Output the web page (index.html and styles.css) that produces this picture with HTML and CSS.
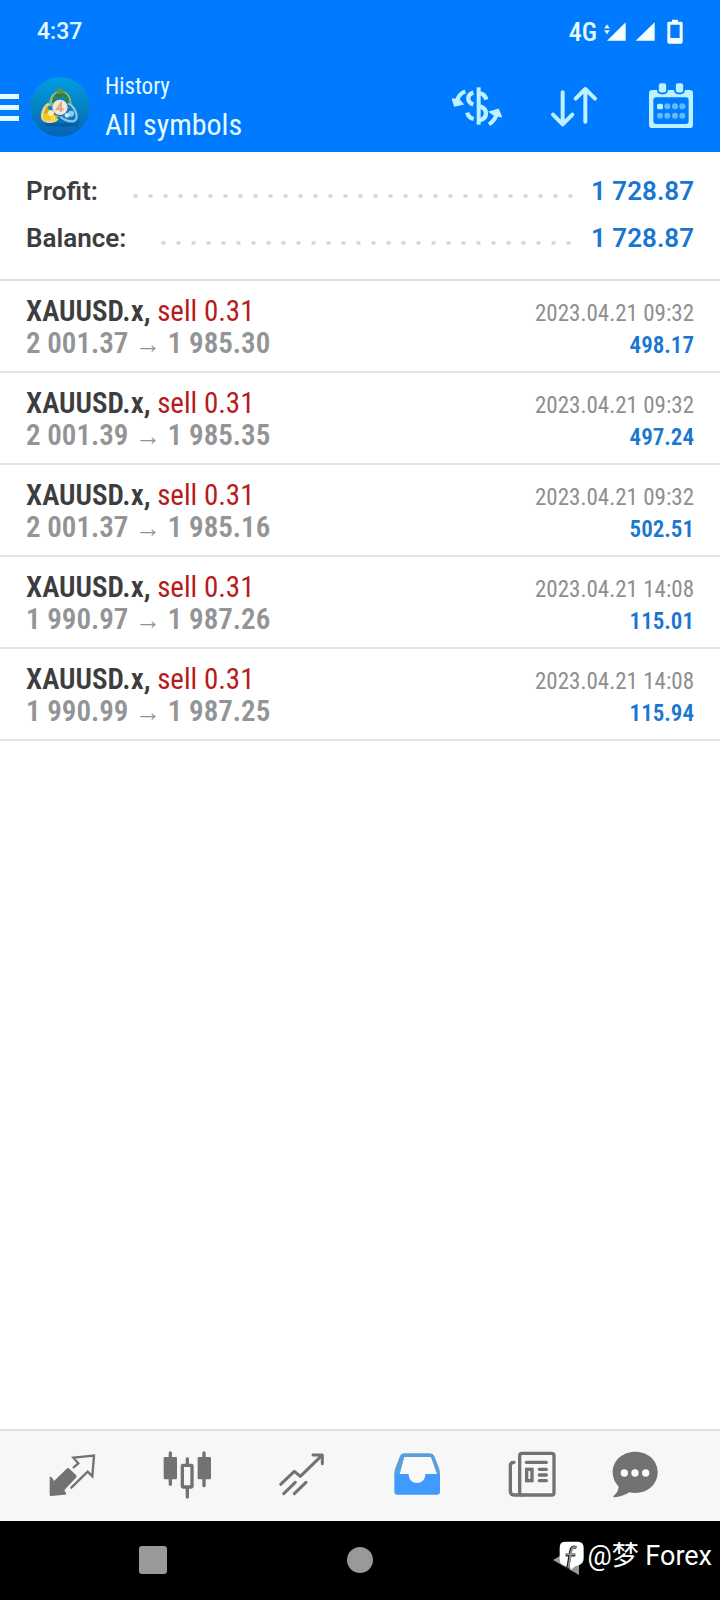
FILE: index.html
```html
<!DOCTYPE html>
<html lang="en">
<head>
<meta charset="utf-8">
<meta name="viewport" content="width=device-width, initial-scale=1">
<title>History</title>
<link rel="stylesheet" href="styles.css">
</head>
<body>
<div class="app">
  <header class="top">
    <div class="status">
      <span class="clock">4:37</span>
      <div class="signals">
        <span class="network">4G</span>
        <svg width="79" height="26" viewBox="0 0 237 78" fill="#f4feff" aria-hidden="true">
          <path d="M9 65L65 10v55z"/>
          <path d="M-1 29L9 15l10 14zM-1 33L9 47l10-14z" stroke="#007bff" stroke-width="2"/>
          <path d="M95 65l57-55v55z"/>
          <path fill-rule="evenodd" d="M204 2h18v6h9q5 0 5 5v56q0 5-5 5h-36q-5 0-5-5V13q0-5 5-5h9zM199 17v40h28V17z"/>
        </svg>
      </div>
    </div>
    <div class="bar">
      <button class="menu" aria-label="Menu">
        <svg width="19" height="28" viewBox="0 0 19 28" fill="#e4fbff"><path d="M0 0h19v5H0zM0 11h19v5H0zM0 22h19v5H0z"/></svg>
      </button>
      <svg class="logo" width="60" height="60" viewBox="0 0 180 180" aria-hidden="true">
        <defs>
          <linearGradient id="disc" x1="0" y1="0" x2="0" y2="1"><stop offset="0" stop-color="#009fe2"/><stop offset=".5" stop-color="#0582c4"/><stop offset="1" stop-color="#0563b5"/></linearGradient>
        </defs>
        <circle cx="90" cy="90" r="89" fill="url(#disc)"/>
        <path d="M43 139h95l14-15-10 22-48 4-48-4z" fill="#034b86" opacity=".5"/>
        <path d="M64 88c-6-54 58-54 54-4" fill="none" stroke="#8bb989" stroke-width="12"/>
        <path d="M70 78c2-36 42-38 44 0" fill="none" stroke="#348239" stroke-width="10"/>
        <path d="M82 124c-10 14-47 13-45-7 1-14 7-29 20-37" fill="none" stroke="#e8d887" stroke-width="9"/>
        <path d="M51 84q7 26 38 34l-17 12q-30-1-31-17z" fill="#c6a92c"/>
        <path d="M119 80c20 18 31 50 8 53q-20 0-36-14" fill="none" stroke="#88c6e4" stroke-width="7"/>
        <path d="M119 88q22 34-2 40-14-2-24-13z" fill="#2875bc"/>
        <ellipse cx="90" cy="42" rx="10" ry="9" fill="#4f984f"/><path d="M84 51h12v13H84z" fill="#397b3d"/>
        <circle cx="51" cy="119" r="12" fill="#f0c72a"/><circle cx="63" cy="108" r="9" fill="#fff0a7"/><circle cx="69" cy="123" r="8" fill="#ffdd43"/>
        <circle cx="123" cy="110" r="9" fill="#84ceff"/><circle cx="111" cy="115" r="7" fill="#c4edff"/>
        <circle cx="90" cy="91" r="23" fill="#eee8df"/>
        <path d="M93 105V79L81 97h20" fill="none" stroke="#e6a480" stroke-width="6"/>
      </svg>
      <div class="titles">
        <span class="subtitle">History</span>
        <h1 class="title">All symbols</h1>
      </div>
      <div class="actions">
        <button aria-label="Currency">
          <svg width="50" height="48" viewBox="0 0 150 144" fill="none" stroke="#bdf1ff" stroke-width="13">
            <path d="M80 19v112" stroke-width="12"/>
            <path d="M64 35Q49 39 49 53q0 12 15 17M82 37q16 0 21 19M82 76q20 5 20 21 0 18-20 21M65 114q-16-4-19-19"/>
            <path d="M40 31Q20 39 16 58" stroke-width="12"/><path d="M1 54l7 21 25-6-12-13z" fill="#bdf1ff" stroke-width="4"/>
            <path d="M111 130q19-13 23-31" stroke-width="12"/><path d="M113 93l26-8 9 22-20-4z" fill="#bdf1ff" stroke-width="4"/>
          </svg>
        </button>
        <button aria-label="Sort">
          <svg width="50" height="48" viewBox="0 0 150 144" fill="none" stroke="#bdf1ff" stroke-width="12" stroke-linecap="round" stroke-linejoin="round"><path d="M41 34v96M12 101l29 29 29-29M109 122V26M80 53l29-29 29 29"/></svg>
        </button>
        <button aria-label="Choose period">
          <svg width="50" height="48" viewBox="0 0 150 144">
            <path fill="#bdf1ff" fill-rule="evenodd" d="M19 27h112q10 0 10 10v94q0 10-10 10H19q-10 0-10-10V37q0-10 10-10zM31 49q-9 0-9 9v62q0 9 9 9h88q9 0 9-9V58q0-9-9-9z"/>
            <g fill="#bdf1ff" stroke="#007bff" stroke-width="5"><rect x="36" y="4" width="27" height="33" rx="9"/><rect x="87" y="4" width="27" height="33" rx="9"/></g>
            <rect x="33" y="68" width="18" height="17" rx="5" fill="#bdf1ff"/>
            <g fill="#62bbff"><circle cx="64" cy="76" r="9"/><circle cx="87" cy="76" r="9"/><circle cx="109" cy="76" r="9"/><circle cx="42" cy="104" r="9"/><circle cx="64" cy="104" r="9"/><circle cx="87" cy="104" r="9"/><circle cx="109" cy="104" r="9"/></g>
          </svg>
        </button>
      </div>
    </div>
  </header>

  <main class="content">
    <dl class="summary">
      <div class="total"><dt>Profit:</dt><dd>1 728.87</dd></div>
      <div class="total"><dt>Balance:</dt><dd>1 728.87</dd></div>
    </dl>
    <ul class="deals">
      <li class="deal">
        <div class="line"><span class="symbol">XAUUSD.x, <span class="side">sell 0.31</span></span><time class="time">2023.04.21 09:32</time></div>
        <div class="line"><span class="prices">2 001.37 <span class="arrow">→</span> 1 985.30</span><span class="gain">498.17</span></div>
      </li>
      <li class="deal">
        <div class="line"><span class="symbol">XAUUSD.x, <span class="side">sell 0.31</span></span><time class="time">2023.04.21 09:32</time></div>
        <div class="line"><span class="prices">2 001.39 <span class="arrow">→</span> 1 985.35</span><span class="gain">497.24</span></div>
      </li>
      <li class="deal">
        <div class="line"><span class="symbol">XAUUSD.x, <span class="side">sell 0.31</span></span><time class="time">2023.04.21 09:32</time></div>
        <div class="line"><span class="prices">2 001.37 <span class="arrow">→</span> 1 985.16</span><span class="gain">502.51</span></div>
      </li>
      <li class="deal">
        <div class="line"><span class="symbol">XAUUSD.x, <span class="side">sell 0.31</span></span><time class="time">2023.04.21 14:08</time></div>
        <div class="line"><span class="prices">1 990.97 <span class="arrow">→</span> 1 987.26</span><span class="gain">115.01</span></div>
      </li>
      <li class="deal">
        <div class="line"><span class="symbol">XAUUSD.x, <span class="side">sell 0.31</span></span><time class="time">2023.04.21 14:08</time></div>
        <div class="line"><span class="prices">1 990.99 <span class="arrow">→</span> 1 987.25</span><span class="gain">115.94</span></div>
      </li>
    </ul>
  </main>

  <nav class="tabs">
    <button class="tab" aria-label="Quotes">
      <svg width="48" height="48" viewBox="0 0 144 144">
        <path fill="#727272" d="M5 78q5-3 13 12l38-37q4-4 8 0l20 19q4 4 0 8l-34 36q-2 5 5 10 0 5-5 5l-41 4q-4 0-4-4z"/>
        <path fill="none" stroke="#727272" stroke-width="7" stroke-linecap="round" d="M77 49l14-12-15-17 62-6-5 62-14-14-49 48"/>
      </svg>
    </button>
    <button class="tab" aria-label="Charts">
      <svg width="48" height="48" viewBox="0 0 144 144" fill="#727272">
        <rect x="2" y="18" width="40" height="67" rx="4"/><rect x="104" y="18" width="40" height="67" rx="4"/>
        <path d="M22 6v94M123 6v98M73 24v18M73 108v30" stroke="#727272" stroke-width="10" stroke-linecap="round"/>
        <rect x="58" y="43" width="29" height="65" rx="2" fill="#f7f7f7" stroke="#727272" stroke-width="10"/>
      </svg>
    </button>
    <button class="tab" aria-label="Trade">
      <svg width="48" height="48" viewBox="0 0 144 144" fill="none" stroke="#727272" stroke-width="9" stroke-linecap="round" stroke-linejoin="round"><path d="M8 100l41-39 18 15 64-62M105 12h28v26M17 128l35-34M49 128l35-34"/></svg>
    </button>
    <button class="tab" aria-label="History" aria-current="page">
      <svg width="48" height="48" viewBox="0 0 144 144">
        <path fill="#5a9fd9" d="M33 7h78q9 0 13 8l14 36q3 8 3 18H4q0-10 3-18l14-36q3-8 12-8z"/>
        <path fill="#f9f9f9" d="M34 18h76q3 0 5 4l17 48H97q-3 27-25 27T47 70H20l14-52z"/>
        <path fill="#419bff" d="M4 69h43c0 36 50 36 50 0h44v53q0 9-9 9H13q-9 0-9-9z"/>
      </svg>
    </button>
    <button class="tab" aria-label="News">
      <svg width="48" height="48" viewBox="0 0 144 144" fill="none" stroke="#727272" stroke-width="10" stroke-linecap="round">
        <rect x="35" y="7" width="103" height="125" rx="7"/><path d="M18 34Q7 34 7 44v76q0 12 11 12h22M55 34h60M94 55h21M94 72h21M94 89h21"/><rect x="56" y="55" width="16" height="34"/>
      </svg>
    </button>
    <button class="tab tab-last" aria-label="Messages">
      <svg width="48" height="48" viewBox="0 0 144 144">
        <path fill="#727272" d="M73 2c38 0 67 26 67 62s-29 62-67 62q-9 0-18-2-21 14-46 15-3 0-2-4 14-10 16-28Q5 89 5 64C5 28 35 2 73 2z"/>
        <g fill="#fafafa"><circle cx="40" cy="66" r="11"/><circle cx="72" cy="66" r="11"/><circle cx="104" cy="66" r="11"/></g>
      </svg>
    </button>
  </nav>

  <footer class="system">
    <button aria-label="Recent apps"><svg width="30" height="30" viewBox="0 0 30 30"><rect x="1" y="1" width="28" height="28" rx="3" fill="#999"/></svg></button>
    <button aria-label="Home"><svg width="30" height="30" viewBox="0 0 30 30"><circle cx="15" cy="15" r="13" fill="#999"/></svg></button>
    <button aria-label="Back"><svg width="30" height="30" viewBox="0 0 30 30"><path d="M1 15L27 0v30z" fill="#999"/></svg></button>
    <div class="credit">
      <svg width="26" height="30" viewBox="0 0 78 90" aria-hidden="true">
        <path d="M17 2h40q17 0 17 19v31q0 20-20 22-9 1-17 13-4-12-17-13Q2 72 2 54V21Q2 2 17 2z" fill="#fff"/>
        <path d="M52 20q-14-7-17 10l-9 53M20 42h29" fill="none" stroke="#222" stroke-width="9"/>
        <path d="M54 20q-14-7-17 10l-9 50M22 40h26" fill="none" stroke="#999" stroke-width="5"/>
      </svg>
      <span>@梦 Forex</span>
    </div>
  </footer>
</div>
</body>
</html>
```
FILE: styles.css
```css
* {
  box-sizing: border-box;
}

body {
  margin: 0;
  background: #fff;
  color: #3c3d3f;
  font-family: "Roboto Condensed", "Liberation Sans Narrow", Roboto, sans-serif;
}

button {
  padding: 0;
  border: 0;
  background: none;
}

svg {
  display: block;
  flex: none;
}

.app {
  display: flex;
  flex-direction: column;
  min-height: 100vh;
}

.top {
  background: #007bff;
  color: #e4fbff;
}

.status {
  display: flex;
  align-items: center;
  justify-content: space-between;
  height: 62px;
  padding: 1px 37px 0;
}

.clock {
  font: 500 23px/28px Roboto, sans-serif;
}

.signals {
  display: flex;
  align-items: center;
  gap: 7px;
}

.network {
  font-size: 26px;
  font-weight: 500;
  line-height: 28px;
}

.bar {
  display: flex;
  align-items: center;
  height: 90px;
  padding-right: 24px;
}

.menu {
  padding-top: 2px;
}

.logo {
  margin-left: 11px;
}

.titles {
  display: flex;
  flex-direction: column;
  margin-left: 15px;
  padding-top: 2px;
}

.subtitle {
  font-size: 23px;
  line-height: 34px;
}

.title {
  margin: 0;
  font-size: 30px;
  font-weight: 400;
  line-height: 42px;
}

.actions {
  display: flex;
  gap: 47px;
  margin-left: auto;
  padding-bottom: 4px;
}

.content {
  flex: 1;
}

.summary {
  margin: 0;
  padding: 16px 26px 17px;
  border-bottom: 2px solid #dfdfdf;
  font: 600 26px/47px Roboto, sans-serif;
}

.total {
  display: flex;
  align-items: center;
}

.total::after {
  content: "";
  flex: 1;
  order: 1;
  height: 4px;
  margin: 8px 12px 0 30px;
  background: radial-gradient(circle, #d4d4d4 1px, transparent 3px) 0 0 / 15px 4px repeat-x;
}

.total dd {
  order: 2;
  margin: 0;
  color: #1976d2;
}

.deals {
  margin: 0;
  padding: 0;
  list-style: none;
}

.deal {
  padding: 14px 26px 12px;
  border-bottom: 2px solid #e2e2e2;
}

.line {
  display: flex;
  align-items: baseline;
  justify-content: space-between;
  height: 32px;
  font-size: 29px;
  line-height: 32px;
}

.symbol,
.prices,
.gain {
  font-weight: 600;
}

.symbol,
.prices {
  font-size: 29px;
}

.side {
  color: #b71c1c;
  font-weight: 400;
}

.prices {
  color: #929496;
}

.arrow {
  font-size: 26px;
}

.time {
  color: #8e8e8e;
  font-size: 23px;
}

.gain {
  color: #1976d2;
  font-size: 23px;
}

.tabs {
  display: flex;
  height: 92px;
  padding: 0 40px 2px 14px;
  border-top: 2px solid #e0e0e0;
  background: #f7f7f7;
}

.tab {
  display: flex;
  flex: 115;
  align-items: center;
  justify-content: center;
}

.tab-last {
  flex: 91;
}

.system {
  position: relative;
  display: flex;
  height: 79px;
  padding: 0 50px 2px;
  background: #000;
}

.system button {
  display: flex;
  flex: 1;
  align-items: center;
  justify-content: center;
}

.credit {
  position: absolute;
  right: 8px;
  bottom: 26px;
  display: flex;
  align-items: center;
  gap: 2px;
  color: #fff;
  font: 400 27px/36px Roboto, "Noto Sans CJK SC", sans-serif;
}
```
